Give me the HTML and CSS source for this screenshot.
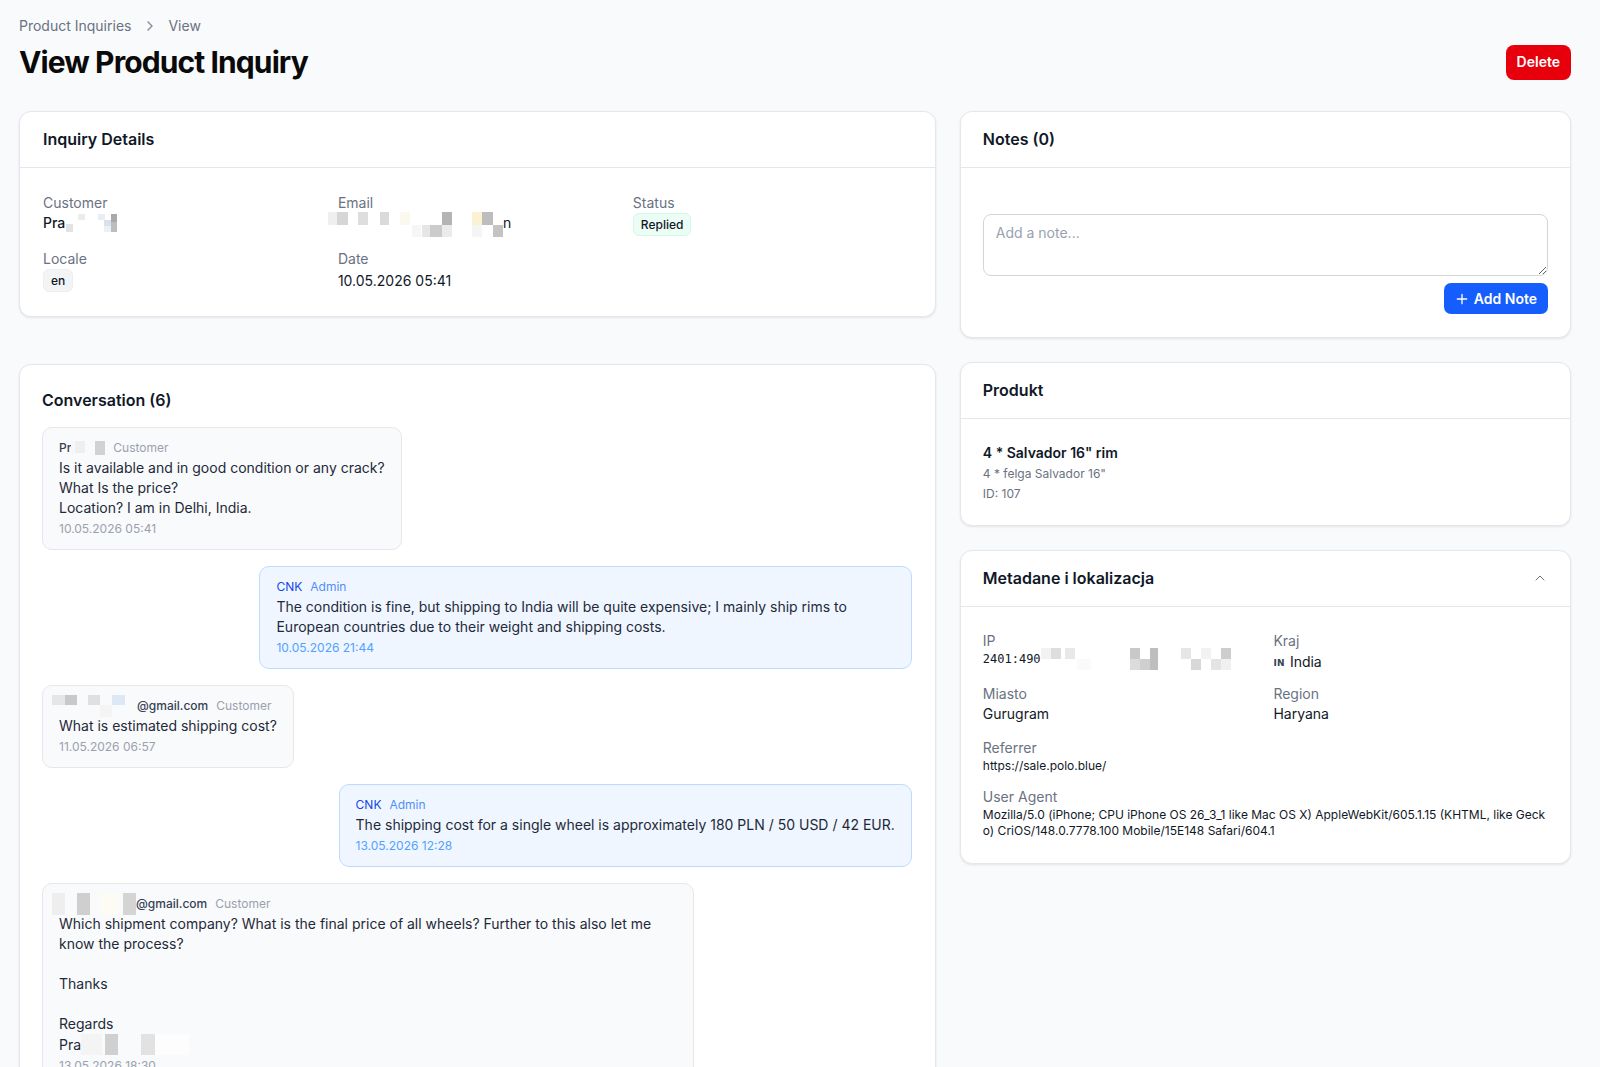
FILE: index.html
```html
<!DOCTYPE html>
<html lang="en">
<head>
<meta charset="utf-8">
<title>View Product Inquiry</title>
<link rel="stylesheet" href="styles.css">
</head>
<body>
<div class="page">
  <header class="page-header">
    <nav class="breadcrumb">
      <span class="crumb">Product Inquiries</span>
      <svg class="crumb-sep" viewBox="0 0 16 16" fill="none" stroke="currentColor" stroke-width="1.5" stroke-linecap="round" stroke-linejoin="round"><path d="M6 4l4 4-4 4"/></svg>
      <span class="crumb">View</span>
    </nav>
    <div class="title-row">
      <h1 class="page-title">View Product Inquiry</h1>
      <button class="btn btn-danger" type="button">Delete</button>
    </div>
  </header>

  <div class="layout">
    <div class="col col-main">
      <section class="card">
        <div class="card-header"><h2 class="card-title">Inquiry Details</h2></div>
        <div class="card-body details-body">
          <div class="details-grid">
            <div class="field">
              <div class="field-label">Customer</div>
              <div class="field-value strong">Pra<svg class="mosaic" width="52" height="20" viewBox="0 0 52 20"><rect x="1" y="11" width="7" height="8" fill="#e3e3e3"/><rect x="13" y="1" width="7" height="6" fill="#ececec"/><rect x="33" y="1" width="7" height="6" fill="#e8eef5"/><rect x="39" y="7" width="7" height="6" fill="#d9e2ec"/><rect x="39" y="13" width="7" height="6" fill="#eef1f4"/><rect x="46" y="1" width="6" height="18" fill="#bdbdbd"/><rect x="46" y="1" width="6" height="8" fill="#a9a9a9"/></svg></div>
            </div>
            <div class="field">
              <div class="field-label">Email</div>
              <div class="field-value"><svg class="mosaic mosaic-email" width="175" height="26" viewBox="0 0 175 26"><rect x="0" y="1" width="9" height="13" fill="#efefef"/><rect x="9" y="1" width="11" height="13" fill="#d6d6d6"/><rect x="30" y="1" width="10" height="13" fill="#dedede"/><rect x="52" y="1" width="9" height="13" fill="#dadada"/><rect x="72" y="1" width="10" height="13" fill="#fbf8ee"/><rect x="84" y="14" width="9" height="12" fill="#f6f6f6"/><rect x="94" y="14" width="8" height="12" fill="#e6e6e6"/><rect x="102" y="14" width="12" height="12" fill="#cbcbcb"/><rect x="114" y="1" width="10" height="13" fill="#b4b4b4"/><rect x="114" y="14" width="10" height="12" fill="#ebebeb"/><rect x="144" y="1" width="10" height="13" fill="#fdf1d3"/><rect x="154" y="1" width="11" height="13" fill="#bdbdbd"/><rect x="144" y="14" width="10" height="12" fill="#f5f5f5"/><rect x="165" y="14" width="10" height="12" fill="#c4c4c4"/></svg>n</div>
            </div>
            <div class="field">
              <div class="field-label">Status</div>
              <div class="field-value"><span class="badge badge-green">Replied</span></div>
            </div>
            <div class="field">
              <div class="field-label">Locale</div>
              <div class="field-value"><span class="badge badge-gray">en</span></div>
            </div>
            <div class="field">
              <div class="field-label">Date</div>
              <div class="field-value date-value">10.05.2026 05:41</div>
            </div>
          </div>
        </div>
      </section>

      <section class="card conversation">
        <h2 class="card-title">Conversation (6)</h2>
        <div class="messages">
          <article class="msg msg-customer">
            <div class="msg-head"><span class="msg-name">Pr<svg class="mosaic mosaic-inline" width="34" height="14" viewBox="0 0 34 14"><rect x="0" y="0" width="3" height="14" fill="#f7f7f7"/><rect x="4" y="0" width="10" height="12" fill="#efefef"/><rect x="24" y="0" width="10" height="14" fill="#d2d2d2"/></svg></span><span class="msg-role">Customer</span></div>
            <div class="msg-text">Is it available and in good condition or any crack?
What Is the price?
Location? I am in Delhi, India.</div>
            <div class="msg-time">10.05.2026 05:41</div>
          </article>

          <article class="msg msg-admin">
            <div class="msg-head"><span class="msg-name">CNK</span><span class="msg-role">Admin</span></div>
            <div class="msg-text">The condition is fine, but shipping to India will be quite expensive; I mainly ship rims to European countries due to their weight and shipping costs.</div>
            <div class="msg-time">10.05.2026 21:44</div>
          </article>

          <article class="msg msg-customer">
            <div class="msg-head"><span class="msg-name"><svg class="mosaic mosaic-lead" width="85" height="22" viewBox="0 0 85 22"><rect x="0" y="0" width="13" height="10" fill="#e6e6e6"/><rect x="13" y="0" width="12" height="10" fill="#c9c9c9"/><rect x="36" y="0" width="12" height="10" fill="#e0e0e0"/><rect x="48" y="10" width="12" height="12" fill="#f4f4f4"/><rect x="60" y="0" width="13" height="10" fill="#dde8f5"/></svg>@gmail.com</span><span class="msg-role">Customer</span></div>
            <div class="msg-text">What is estimated shipping cost?</div>
            <div class="msg-time">11.05.2026 06:57</div>
          </article>

          <article class="msg msg-admin">
            <div class="msg-head"><span class="msg-name">CNK</span><span class="msg-role">Admin</span></div>
            <div class="msg-text">The shipping cost for a single wheel is approximately 180 PLN / 50 USD / 42 EUR.</div>
            <div class="msg-time">13.05.2026 12:28</div>
          </article>

          <article class="msg msg-customer">
            <div class="msg-head"><span class="msg-name"><svg class="mosaic mosaic-lead" width="84" height="22" viewBox="0 0 84 22"><rect x="0" y="0" width="13" height="22" fill="#eeeeee"/><rect x="25" y="0" width="13" height="22" fill="#cfcfcf"/><rect x="47" y="0" width="20" height="22" fill="#fcfcf4"/><rect x="71" y="0" width="13" height="22" fill="#d4d4d4"/></svg>@gmail.com</span><span class="msg-role">Customer</span></div>
            <div class="msg-text">Which shipment company? What is the final price of all wheels? Further to this also let me know the process?

Thanks

Regards
Pra<svg class="mosaic mosaic-text" width="108" height="21" viewBox="0 0 108 21"><rect x="0" y="0" width="21" height="21" fill="#f4f4f4"/><rect x="24" y="0" width="13" height="21" fill="#d0d0d0"/><rect x="60" y="0" width="14" height="21" fill="#e2e2e2"/><rect x="74" y="0" width="34" height="21" fill="#fdfdfd"/></svg></div>
            <div class="msg-time">13.05.2026 18:30</div>
          </article>
        </div>
      </section>
    </div>

    <div class="col col-side">
      <section class="card">
        <div class="card-header"><h2 class="card-title">Notes (0)</h2></div>
        <div class="card-body notes-body">
          <form class="note-form">
            <textarea class="note-input" placeholder="Add a note..."></textarea>
            <div class="form-actions">
              <button class="btn btn-primary" type="button"><svg class="btn-icon" viewBox="0 0 24 24" fill="none" stroke="currentColor" stroke-width="2" stroke-linecap="round"><path d="M5 12h14M12 5v14"/></svg>Add Note</button>
            </div>
          </form>
        </div>
      </section>

      <section class="card">
        <div class="card-header"><h2 class="card-title">Produkt</h2></div>
        <div class="card-body product-body">
          <div class="product-name">4 * Salvador 16" rim</div>
          <div class="product-sub">4 * felga Salvador 16"</div>
          <div class="product-id">ID: 107</div>
        </div>
      </section>

      <section class="card">
        <div class="card-header">
          <h2 class="card-title">Metadane i lokalizacja</h2>
          <svg class="collapse-icon" viewBox="0 0 24 24" fill="none" stroke="currentColor" stroke-width="1.5" stroke-linecap="round" stroke-linejoin="round"><path d="m18 15-6-6-6 6"/></svg>
        </div>
        <div class="card-body">
          <div class="meta-grid">
            <div class="field">
              <div class="field-label">IP</div>
              <div class="field-value mono">2401:490<svg class="mosaic" width="200" height="22" viewBox="0 0 200 22"><rect x="0" y="0" width="10" height="11" fill="#f2f2f2"/><rect x="10" y="0" width="10" height="11" fill="#dedede"/><rect x="24" y="0" width="10" height="11" fill="#e8e8e8"/><rect x="36" y="11" width="14" height="11" fill="#fafafa"/><rect x="89" y="0" width="10" height="11" fill="#c9c9c9"/><rect x="89" y="11" width="10" height="11" fill="#dcdcdc"/><rect x="99" y="11" width="10" height="11" fill="#cfcfcf"/><rect x="109" y="0" width="8" height="22" fill="#bebebe"/><rect x="140" y="0" width="10" height="11" fill="#e6e6e6"/><rect x="150" y="11" width="10" height="11" fill="#d8d8d8"/><rect x="160" y="0" width="10" height="11" fill="#f2f2f2"/><rect x="170" y="11" width="10" height="11" fill="#e4e4e4"/><rect x="180" y="0" width="10" height="11" fill="#cdcdcd"/><rect x="180" y="11" width="10" height="11" fill="#f0f0f0"/></svg></div>
            </div>
            <div class="field">
              <div class="field-label">Kraj</div>
              <div class="field-value"><span class="flag">IN</span>India</div>
            </div>
            <div class="field">
              <div class="field-label">Miasto</div>
              <div class="field-value">Gurugram</div>
            </div>
            <div class="field">
              <div class="field-label">Region</div>
              <div class="field-value">Haryana</div>
            </div>
          </div>
          <div class="field meta-block referrer">
            <div class="field-label">Referrer</div>
            <div class="field-value small">https://sale.polo.blue/</div>
          </div>
          <div class="field meta-block agent">
            <div class="field-label">User Agent</div>
            <div class="field-value small break">Mozilla/5.0 (iPhone; CPU iPhone OS 26_3_1 like Mac OS X) AppleWebKit/605.1.15 (KHTML, like Gecko) CriOS/148.0.7778.100 Mobile/15E148 Safari/604.1</div>
          </div>
        </div>
      </section>
    </div>
  </div>
</div>
</body>
</html>
```

FILE: styles.css
```css
* { box-sizing: border-box; }

html, body { margin: 0; }

body {
  background: #f9fafb;
  font-family: Inter, "Noto Sans", "Liberation Sans", sans-serif;
  font-size: 14px;
  line-height: 20px;
  color: #101828;
}

.page {
  padding: 16px 29px 40px 19px;
}

/* Header */
.breadcrumb {
  display: flex;
  align-items: center;
  height: 20px;
  font-size: 14px;
  color: #6a7282;
}

.crumb-sep {
  width: 16px;
  height: 16px;
  margin: 0 10px 0 11px;
  color: #8a919c;
}

.title-row {
  display: flex;
  align-items: center;
  justify-content: space-between;
  margin-top: 8px;
}

.page-title {
  margin: 0;
  font-size: 30px;
  line-height: 36px;
  font-weight: 700;
  letter-spacing: -0.9px;
  color: #0a0a0a;
}

.btn {
  display: inline-flex;
  align-items: center;
  font-family: inherit;
  font-size: 14px;
  line-height: 20px;
  font-weight: 600;
  color: #fff;
  border: 0;
  border-radius: 8px;
  cursor: pointer;
}

.btn-danger {
  height: 35px;
  padding: 0 11px;
  background: #e7000b;
}

.btn-primary {
  height: 31px;
  padding: 0 11px 0 10px;
  gap: 4px;
  background: #155dfc;
  border-radius: 7px;
}

.btn-icon {
  width: 16px;
  height: 16px;
}

/* Layout */
.layout {
  display: grid;
  grid-template-columns: 3fr 2fr;
  gap: 24px;
  margin-top: 31px;
  align-items: start;
}

.col {
  display: flex;
  flex-direction: column;
  gap: 24px;
}

.col-main {
  gap: 47px;
}

.card {
  background: #fff;
  border: 1px solid #e5e7eb;
  border-radius: 12px;
  box-shadow: 0 1px 3px rgba(16, 24, 40, 0.06), 0 1px 2px rgba(16, 24, 40, 0.04);
}

.card-header {
  display: flex;
  align-items: center;
  justify-content: space-between;
  padding: 15px 23px 16px;
  border-bottom: 1px solid #e5e7eb;
}

.card-title {
  margin: 0;
  font-size: 16px;
  line-height: 24px;
  font-weight: 600;
  color: #101828;
}

.card-body {
  padding: 24px 23px;
}

.col-side .card-header {
  padding-left: 22px;
  padding-right: 22px;
}

.col-side .card-body {
  padding-left: 22px;
  padding-right: 22px;
}

/* Fields */
.field-label {
  color: #6a7282;
  font-size: 14px;
  line-height: 20px;
}

.field-value {
  display: flex;
  align-items: center;
  color: #101828;
  min-height: 20px;
}

.field-value.strong {
  font-weight: 500;
}

.mosaic {
  display: block;
  flex: none;
}

.mosaic-email {
  margin-top: -2px;
  margin-bottom: -4px;
  margin-left: -10px;
}

.details-body {
  padding-top: 25px;
}

.details-grid {
  display: grid;
  grid-template-columns: repeat(3, 1fr);
  column-gap: 16px;
  row-gap: 13px;
}

.date-value {
  padding-top: 2px;
}

.badge {
  display: inline-block;
  font-size: 12px;
  line-height: 17px;
  font-weight: 500;
  padding: 2px 7px;
  border: 1px solid;
  border-radius: 6px;
}

.badge-green {
  background: #ecfdf5;
  border-color: #d0fae5;
  color: #101828;
}

.badge-gray {
  background: #f3f4f6;
  border-color: #eceef1;
  color: #101828;
}

/* Conversation */
.conversation {
  padding: 23px 23px 24px 22px;
}

.messages {
  display: flex;
  flex-direction: column;
  gap: 16px;
  margin-top: 15px;
}

.msg {
  max-width: 75%;
  padding: 12px 16px;
  border: 1px solid;
  border-radius: 10px;
}

.msg-customer {
  align-self: flex-start;
  background: #f9fafb;
  border-color: #e5e7eb;
}

.msg-admin {
  align-self: flex-end;
  background: #eff6ff;
  border-color: #bedbff;
}

.msg-head {
  display: flex;
  align-items: center;
  gap: 8px;
  height: 16px;
  font-size: 12px;
  line-height: 16px;
  margin-bottom: 2px;
}

.msg-name {
  display: flex;
  align-items: center;
  height: 16px;
  font-weight: 500;
  color: #364153;
}

.msg-role {
  color: #99a1af;
}

.msg-admin .msg-name {
  font-weight: 400;
  color: #1447e6;
}

.msg-admin .msg-role {
  color: #4f8ff7;
}

.mosaic-lead {
  margin: -3px 0 -3px -7px;
}

.mosaic-inline {
  margin: 1px 0;
}

.msg-text {
  white-space: pre-line;
  color: #1e2939;
}

.mosaic-text {
  display: inline-block;
  vertical-align: -5px;
}

.msg-time {
  margin-top: 3px;
  font-size: 12px;
  line-height: 16px;
  color: #99a1af;
}

.msg-admin .msg-time {
  color: #51a2ff;
}

/* Notes */
.notes-body {
  padding-bottom: 23px;
}

.note-form {
  margin-top: 22px;
}

.note-input {
  display: block;
  width: 100%;
  height: 62px;
  padding: 8px 12px;
  font-family: inherit;
  font-size: 14px;
  line-height: 20px;
  color: #101828;
  border: 1px solid #d1d5dc;
  border-radius: 8px;
  resize: vertical;
  background: #fff;
}

.note-input::placeholder {
  color: #99a1af;
}

.form-actions {
  display: flex;
  justify-content: flex-end;
  margin-top: 7px;
}

/* Product */
.product-body {
  padding-bottom: 23px;
}

.product-name {
  font-weight: 600;
  color: #101828;
}

.product-sub {
  margin-top: 3px;
  font-size: 12px;
  line-height: 16px;
  color: #6a7282;
}

.product-id {
  margin-top: 4px;
  font-size: 12px;
  line-height: 16px;
  color: #6a7282;
}

/* Metadata */
.collapse-icon {
  width: 16px;
  height: 16px;
  color: #6a7282;
}

.meta-grid {
  display: grid;
  grid-template-columns: 1fr 1fr;
  column-gap: 16px;
  row-gap: 11px;
}

.field-value.mono {
  font-family: "DejaVu Sans Mono", "Liberation Mono", monospace;
  font-size: 12px;
  line-height: 16px;
  align-items: flex-start;
}

.field-value.mono .mosaic {
  margin-top: -3px;
}

.flag {
  font-family: "DejaVu Sans", sans-serif;
  font-size: 9px;
  font-weight: 700;
  letter-spacing: 0.3px;
  color: #364153;
  margin-right: 5px;
  margin-top: 2px;
}

.meta-block.referrer {
  margin-top: 14px;
}

.meta-block.agent {
  margin-top: 13px;
}

.field-value.small {
  display: block;
  min-height: 0;
  font-size: 12px;
  line-height: 16px;
}

.field-value.break {
  word-break: break-all;
}
```
